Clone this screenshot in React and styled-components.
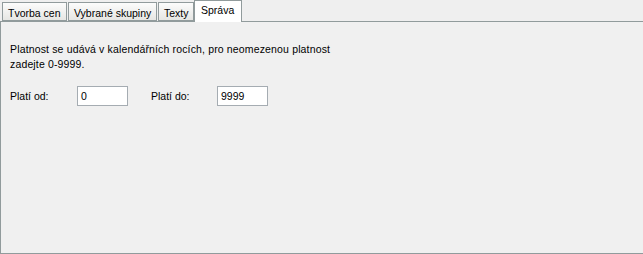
import styled, { createGlobalStyle } from "styled-components";

const Global = createGlobalStyle`
  html, body {
    margin: 0;
    padding: 0;
    background: #efefef;
  }
  body {
    font-family: "Liberation Sans", Arial, sans-serif;
    font-size: 10.5px;
    color: #000;
  }
`;

const Page = styled.div`
  width: 643px;
  height: 254px;
  display: flex;
  flex-direction: column;
  overflow: hidden;
`;

const TabBar = styled.div`
  display: flex;
  align-items: flex-end;
  height: 21px;
  padding-left: 2px;
  position: relative;
  z-index: 1;
`;

const Tab = styled.div`
  box-sizing: border-box;
  width: ${(p) => p.$w}px;
  padding-top: ${(p) => (p.$active ? "3px" : "4px")};
  padding-left: ${(p) => (p.$active ? "6px" : "5px")};
  margin-right: ${(p) => (p.$active ? "0" : "1px")};
  margin-left: ${(p) => (p.$active ? "-1px" : "0")};
  border: 1px solid #919b9c;
  border-bottom: ${(p) => (p.$active ? "none" : "1px solid #919b9c")};
  background: ${(p) =>
    p.$active ? "#ffffff" : "linear-gradient(#fcfcfc, #e6e6e3)"};
  margin-bottom: ${(p) => (p.$active ? "-1px" : "0")};
  height: ${(p) => (p.$active ? "22px" : "19px")};
  white-space: nowrap;
  line-height: 12px;
`;

const Panel = styled.div`
  box-sizing: border-box;
  height: 233px;
  border: 1px solid #919b9c;
  border-right: none;
  background: #f0f0f0;
  padding: 20px 9px 0 9px;
`;

const Note = styled.p`
  margin: 0;
  width: 340px;
  line-height: 15px;
  letter-spacing: 0.15px;
`;

const Row = styled.div`
  display: flex;
  align-items: center;
  margin-top: 14px;
`;

const Label = styled.span`
  width: ${(p) => p.$w}px;
`;

const Field = styled.div`
  box-sizing: border-box;
  width: 51px;
  height: 20px;
  border: 1px solid #a5acb2;
  background: #fff;
  padding: 3px 0 0 3px;
  line-height: 13px;
  margin-right: ${(p) => p.$gap || 0}px;
`;

export default function App() {
  return (
    <Page>
      <Global />
      <TabBar>
        <Tab $w={65}>Tvorba cen</Tab>
        <Tab $w={89}>Vybrané skupiny</Tab>
        <Tab $w={36}>Texty</Tab>
        <Tab $active $w={48}>Správa</Tab>
      </TabBar>
      <Panel>
        <Note>
          Platnost se udává v kalendářních rocích, pro neomezenou platnost
          zadejte 0-9999.
        </Note>
        <Row>
          <Label $w={67}>Platí od:</Label>
          <Field $gap={23}>0</Field>
          <Label $w={66}>Platí do:</Label>
          <Field>9999</Field>
        </Row>
      </Panel>
    </Page>
  );
}
